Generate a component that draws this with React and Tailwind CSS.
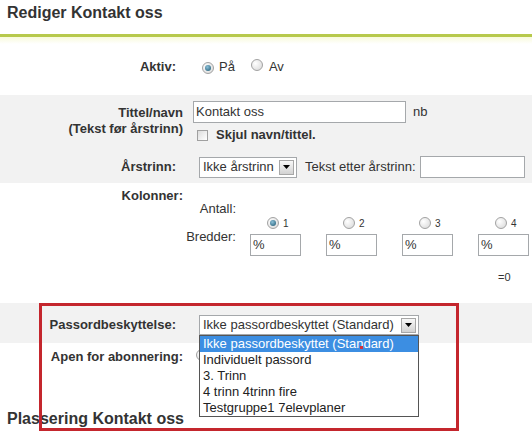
const Radio = ({ checked }) => (
  <span className="inline-flex w-[12px] h-[12px] shrink-0 items-center justify-center rounded-full border border-[#a2a2a2] bg-[radial-gradient(circle_at_35%_35%,#ffffff,#d6d6d6)]">
    {checked && <span className="w-[6px] h-[6px] rounded-full bg-[radial-gradient(circle_at_40%_35%,#8cc0d8,#1b566f)]" />}
  </span>
)

const DropBtn = () => (
  <span className="flex w-[15px] h-[15px] shrink-0 items-center justify-center border border-[#a7a7a7] bg-[linear-gradient(#f8f8f8,#d2d2d2)]">
    <svg width="7" height="4" viewBox="0 0 7 4">
      <path d="M0 0h7L3.5 4z" fill="#000" />
    </svg>
  </span>
)

const Field = ({ className = '', children }) => (
  <div className={`flex shrink-0 items-center h-[22px] border border-[#a5a8ab] bg-white pl-[2px] text-[#333] ${className}`}>
    {children}
  </div>
)

const OPTIONS = [
  'Ikke passordbeskyttet (Standard)',
  'Individuelt passord',
  '3. Trinn',
  '4 trinn 4trinn fire',
  'Testgruppe1 7elevplaner',
]

export default function App() {
  return (
    <div className="relative w-[532px] h-[433px] overflow-hidden bg-white font-['Liberation_Sans',Arial,sans-serif] text-[13px] leading-[16px] text-[#333]">
      {/* header */}
      <div className="h-[34px] pt-[4px] px-[7px] text-[16px] leading-[18px] font-bold text-[#333]">Rediger Kontakt oss</div>
      <div className="h-[3px] bg-[#b7c94c]" />

      {/* Aktiv */}
      <div className="h-[58px] pt-[20px] bg-[linear-gradient(to_bottom,#f8fadb,#ffffff_7px)]">
        <div className="flex items-center h-[20px]">
          <span className="w-[176px] shrink-0 text-right font-bold">Aktiv:</span>
          <span className="ml-[26px]"><Radio checked /></span>
          <span className="ml-[5px]">På</span>
          <span className="ml-[16px]"><Radio /></span>
          <span className="ml-[6px]">Av</span>
        </div>
      </div>

      {/* tittel + årstrinn */}
      <div className="h-[88px] bg-[#f2f2f2] pt-[6px]">
        <div className="flex">
          <div className="w-[183px] shrink-0 pt-[4px] text-right font-bold">
            Tittel/navn
            <br />
            (Tekst før årstrinn)
          </div>
          <div className="ml-[10px]">
            <div className="flex items-center">
              <Field className="w-[213px]">Kontakt oss</Field>
              <span className="ml-[7px]">nb</span>
            </div>
            <div className="flex items-center h-[16px] mt-[4px] ml-[4px]">
              <span className="w-[11px] h-[11px] border border-[#a0a0a0] bg-[linear-gradient(135deg,#dcdcdc,#ffffff)]" />
              <span className="ml-[8px] font-bold">Skjul navn/tittel.</span>
            </div>
          </div>
        </div>
        <div className="flex items-center mt-[13px]">
          <span className="w-[176px] shrink-0 text-right font-bold">Årstrinn:</span>
          <div className="ml-[23px] flex shrink-0 items-center justify-between w-[98px] h-[21px] border border-[#a5a8ab] bg-white pl-[3px] pr-[2px]">
            <span>Ikke årstrinn</span>
            <DropBtn />
          </div>
          <span className="ml-[8px] shrink-0">Tekst etter årstrinn:</span>
          <Field className="ml-[4px] w-[105px]" />
        </div>
      </div>

      {/* kolonner */}
      <div className="h-[120px] pt-[5px] flex">
        <span className="w-[183px] shrink-0 text-right font-bold">Kolonner:</span>
        <div className="ml-[3px] mt-[13px] shrink-0">
          <div className="flex h-[28px]">
            <span className="w-[50px] shrink-0 text-right">Antall:</span>
            <div className="ml-[14px] grid grid-cols-[76px_76px_76px_76px]">
              {[1, 2, 3, 4].map((n) => (
                <div key={n} className="flex items-end pl-[17px] pt-[6px]">
                  <Radio checked={n === 1} />
                  <span className="ml-[4px] text-[10px] leading-[10px]">{n}</span>
                </div>
              ))}
            </div>
          </div>
          <div className="flex">
            <span className="w-[50px] shrink-0 text-right">Bredder:</span>
            <div className="ml-[14px] grid grid-cols-[76px_76px_76px_76px] pt-[5px]">
              {[1, 2, 3, 4].map((n) => (
                <Field key={n} className="w-[51px]">%</Field>
              ))}
            </div>
          </div>
          <div className="flex mt-[14px]">
            <span className="w-[50px] shrink-0" />
            <div className="ml-[14px] grid grid-cols-[76px_76px_76px_76px] text-[11px] leading-[14px]">
              <span />
              <span />
              <span />
              <span className="pl-[20px]">=0</span>
            </div>
          </div>
        </div>
      </div>

      {/* passord */}
      <div className="h-[40px] bg-[#f2f2f2] pt-[12px]">
        <div className="flex items-center">
          <span className="w-[176px] shrink-0 text-right font-bold">Passordbeskyttelse:</span>
          <div className="ml-[23px] flex shrink-0 items-center justify-between w-[220px] h-[20px] border border-[#a5a8ab] bg-white pl-[3px] pr-[2px]">
            <span>Ikke passordbeskyttet (Standard)</span>
            <DropBtn />
          </div>
        </div>
      </div>

      <div className="flex items-center pt-[6px]">
        <span className="w-[183px] shrink-0 text-right font-bold">Apen for abonnering:</span>
        <span className="ml-[13px]"><Radio /></span>
      </div>

      <div className="mt-[45px] px-[7px] text-[16px] leading-[18px] font-bold">Plassering Kontakt oss</div>

      {/* open dropdown list */}
      <div className="absolute left-[199px] top-[335px] w-[220px] border border-[#555] bg-white">
        {OPTIONS.map((o, i) => (
          <div key={o} className={`h-[16px] pl-[3px] ${i === 0 ? 'bg-[#3c8ee2] text-white' : 'text-[#222]'}`}>
            {o}
          </div>
        ))}
      </div>
      <span className="absolute left-[360px] top-[346px] w-[3px] h-[3px] bg-[#d2303c]" />

      {/* highlight box */}
      <div className="absolute left-[39px] top-[303px] w-[420px] h-[128px] border-[3px] border-[#c4262d]" />
    </div>
  )
}
